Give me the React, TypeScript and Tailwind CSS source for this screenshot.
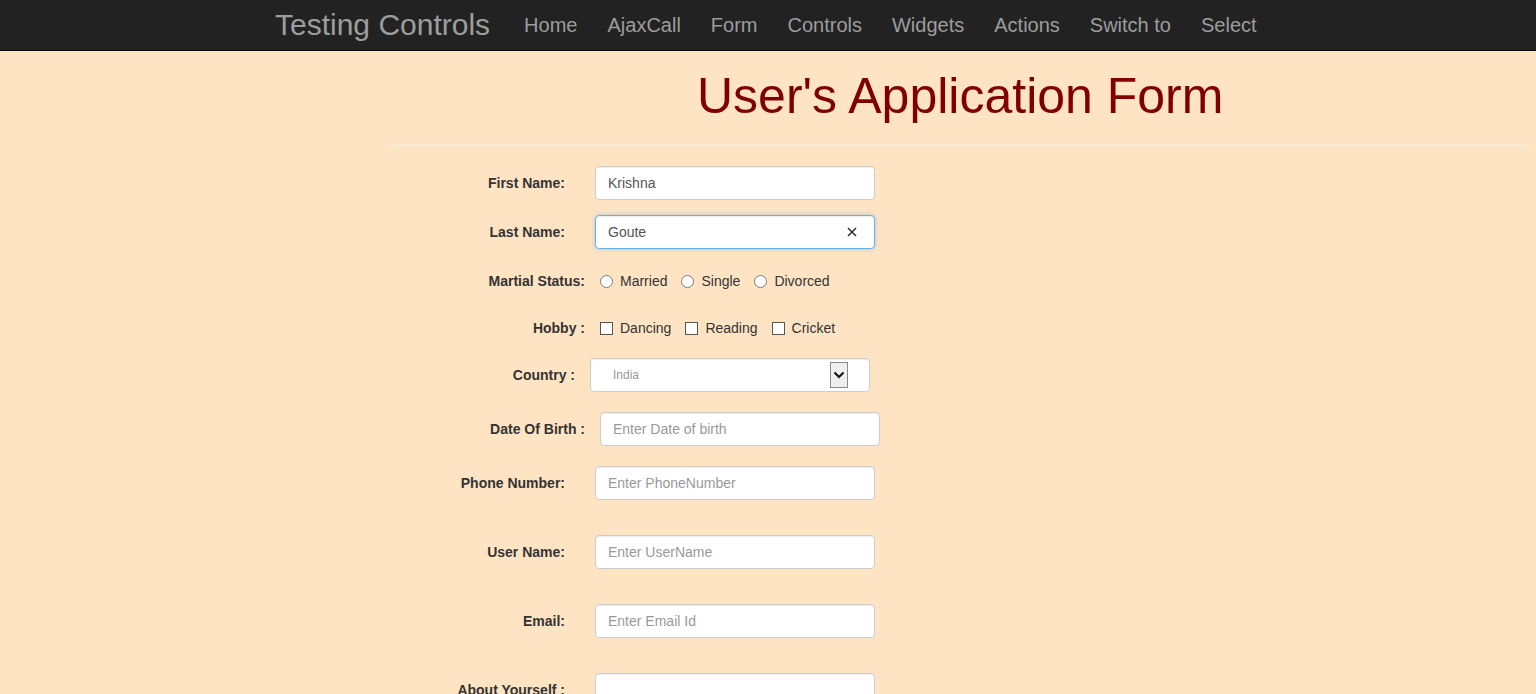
import React from "react";

const navItems = ["Home", "AjaxCall", "Form", "Controls", "Widgets", "Actions", "Switch to", "Select"];

const inputCls =
  "h-[34px] w-[280px] rounded-[4px] border border-[#ccc] bg-white px-[12px] text-[14px] text-[#555] shadow-[inset_0_1px_1px_rgba(0,0,0,0.075)] outline-none placeholder:text-[#999]";

function Radio({ label, first }: { label: string; first?: boolean }) {
  return (
    <div className={`flex items-center ${first ? "" : "ml-[14px]"}`}>
      <span className="inline-block h-[13px] w-[13px] rounded-full border border-[#7a7a7a] bg-white" />
      <span className="ml-[7px] text-[14px] text-[#333]">{label}</span>
    </div>
  );
}

function Check({ label, first }: { label: string; first?: boolean }) {
  return (
    <div className={`flex items-center ${first ? "" : "ml-[14px]"}`}>
      <span className="inline-block h-[13px] w-[13px] border border-[#555] bg-white" />
      <span className="ml-[7px] text-[14px] text-[#333]">{label}</span>
    </div>
  );
}

export default function App() {
  return (
    <div
      className="h-[694px] w-[1536px] overflow-hidden bg-[#ffe4c4] text-[14px] text-[#333]"
      style={{ fontFamily: '"Liberation Sans", Arial, sans-serif' }}
    >
      {/* Navbar */}
      <div className="flex h-[51px] items-center border-b border-[#080808] bg-[#222]">
        <div className="ml-[275px] text-[30px] leading-[34px] text-[#9d9d9d]">Testing Controls</div>
        <div className="ml-[19px] flex items-center">
          {navItems.map((n) => (
            <span key={n} className="px-[15px] text-[20px] leading-[23px] text-[#9d9d9d]">
              {n}
            </span>
          ))}
        </div>
      </div>

      {/* Title */}
      <h1 className="ml-[697px] mt-[18px] text-[50px] font-normal leading-[55px] text-[#800000]">
        User's Application Form
      </h1>
      <div className="ml-[388px] mr-[6px] mt-[21px] h-0 border-t border-[#f8efe4]" />

      {/* Form */}
      <div className="mt-[20px] flex flex-col">
        <div className="flex h-[34px] items-center">
          <label className="w-[565px] text-right font-bold">First Name:</label>
          <input className={`ml-[30px] ${inputCls}`} readOnly value="Krishna" />
        </div>

        <div className="mt-[15px] flex h-[34px] items-center">
          <label className="w-[565px] text-right font-bold">Last Name:</label>
          <div className="relative ml-[30px]">
            <input
              className="h-[34px] w-[280px] rounded-[4px] border border-[#66afe9] bg-white px-[12px] text-[14px] text-[#555] shadow-[inset_0_1px_1px_rgba(0,0,0,0.075),0_0_5px_rgba(102,175,233,0.5)] outline-none"
              readOnly
              value="Goute"
            />
            <svg
              className="absolute left-[252px] top-[12px]"
              width="10"
              height="10"
              viewBox="0 0 10 10"
            >
              <path d="M1 1 L9 9 M9 1 L1 9" stroke="#333" strokeWidth="1.6" />
            </svg>
          </div>
        </div>

        <div className="mt-[15px] flex h-[34px] items-center">
          <label className="w-[585px] text-right font-bold">Martial Status:</label>
          <div className="ml-[15px] flex items-center">
            <Radio label="Married" first />
            <Radio label="Single" />
            <Radio label="Divorced" />
          </div>
        </div>

        <div className="mt-[13px] flex h-[34px] items-center">
          <label className="w-[585px] text-right font-bold">Hobby :</label>
          <div className="ml-[15px] flex items-center">
            <Check label="Dancing" first />
            <Check label="Reading" />
            <Check label="Cricket" />
          </div>
        </div>

        <div className="mt-[13px] flex h-[34px] items-center">
          <label className="w-[575px] text-right font-bold">Country :</label>
          <div className="ml-[15px] flex h-[34px] w-[280px] items-center justify-between rounded-[4px] border border-[#ccc] bg-white pl-[22px] pr-[21px] shadow-[inset_0_1px_1px_rgba(0,0,0,0.075)]">
            <span className="text-[12px] text-[#999]">India</span>
            <div className="flex h-[26px] w-[18px] items-center justify-center border border-[#8a8a8a] bg-[#efefef]">
              <svg width="12" height="8" viewBox="0 0 12 8">
                <path d="M1.5 1.5 L6 6 L10.5 1.5" fill="none" stroke="#111" strokeWidth="2" />
              </svg>
            </div>
          </div>
        </div>

        <div className="mt-[20px] flex h-[34px] items-center">
          <label className="w-[585px] text-right font-bold">Date Of Birth :</label>
          <input className={`ml-[15px] ${inputCls}`} readOnly placeholder="Enter Date of birth" />
        </div>

        <div className="mt-[20px] flex h-[34px] items-center">
          <label className="w-[565px] text-right font-bold">Phone Number:</label>
          <input className={`ml-[30px] ${inputCls}`} readOnly placeholder="Enter PhoneNumber" />
        </div>

        <div className="mt-[35px] flex h-[34px] items-center">
          <label className="w-[565px] text-right font-bold">User Name:</label>
          <input className={`ml-[30px] ${inputCls}`} readOnly placeholder="Enter UserName" />
        </div>

        <div className="mt-[35px] flex h-[34px] items-center">
          <label className="w-[565px] text-right font-bold">Email:</label>
          <input className={`ml-[30px] ${inputCls}`} readOnly placeholder="Enter Email Id" />
        </div>

        <div className="mt-[35px] flex items-start">
          <label className="flex h-[34px] w-[565px] items-center justify-end font-bold">About Yourself :</label>
          <textarea
            className="ml-[30px] h-[80px] w-[280px] resize-none rounded-[4px] border border-[#ccc] bg-white px-[12px] py-[6px] text-[14px] text-[#555] shadow-[inset_0_1px_1px_rgba(0,0,0,0.075)] outline-none"
            readOnly
          />
        </div>
      </div>
    </div>
  );
}
